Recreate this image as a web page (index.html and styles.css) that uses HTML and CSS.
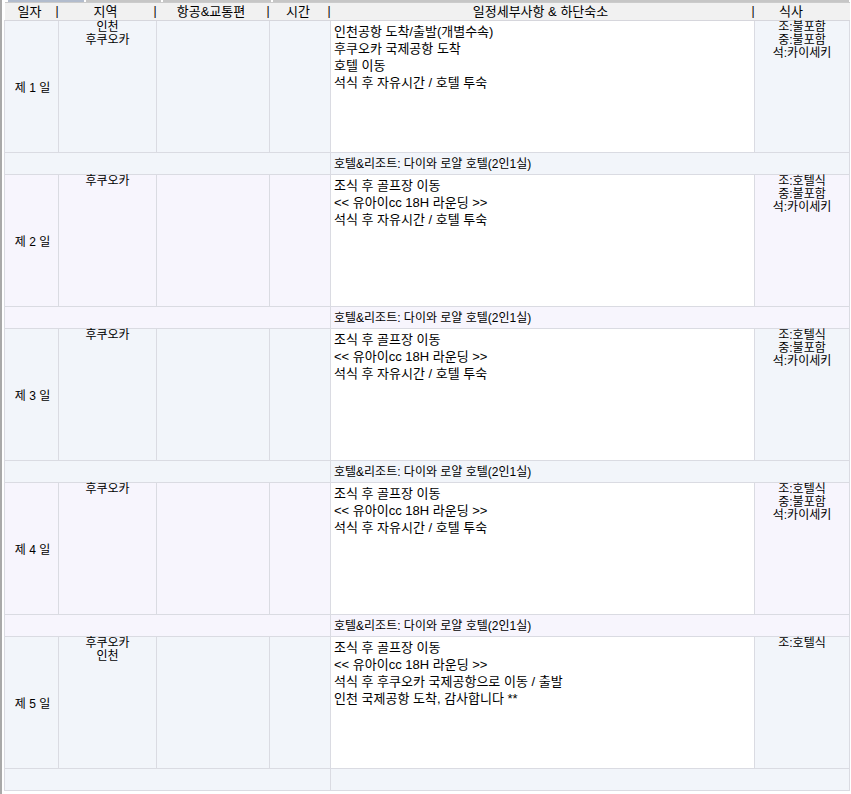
FILE: index.html
```html
<!DOCTYPE html>
<html lang="ko">
<head>
<meta charset="utf-8">
<title>일정표</title>
<link rel="stylesheet" href="styles.css">
</head>
<body>
<div class="page">
  <div class="edge"></div>
  <div class="content">
    <div class="tabs">
      <span class="tab tab-active"></span>
      <span class="tab tab-a"></span>
      <span class="tab tab-b"></span>
      <span class="tab tab-c"></span>
    </div>
    <table class="sched">
      <colgroup>
        <col class="c-day"><col class="c-area"><col class="c-trans"><col class="c-time"><col class="c-detail"><col class="c-meal">
      </colgroup>
      <thead>
        <tr class="head">
          <th><span class="h-txt">일자</span><span class="bar">|</span></th>
          <th><span class="h-txt">지역</span><span class="bar">|</span></th>
          <th><span class="h-txt">항공&amp;교통편</span><span class="bar">|</span></th>
          <th><span class="h-txt">시간</span><span class="bar">|</span></th>
          <th><span class="h-txt">일정세부사항 &amp; 하단숙소</span><span class="bar">|</span></th>
          <th class="h-meal"><span class="h-txt">식사</span></th>
        </tr>
      </thead>
      <tbody>
        <tr class="day odd">
          <td class="d-day">제 1 일</td>
          <td class="d-area">인천<br>후쿠오카</td>
          <td></td>
          <td></td>
          <td class="d-detail">인천공항 도착/출발(개별수속)<br>후쿠오카 국제공항 도착<br>호텔 이동<br>석식 후 자유시간 / 호텔 투숙</td>
          <td class="d-meal">조:불포함<br>중:불포함<br>석:카이세키</td>
        </tr>
        <tr class="hotel odd">
          <td colspan="4"></td>
          <td colspan="2" class="h-name">호텔&amp;리조트: 다이와 로얄 호텔(2인1실)</td>
        </tr>
        <tr class="day even">
          <td class="d-day">제 2 일</td>
          <td class="d-area">후쿠오카</td>
          <td></td>
          <td></td>
          <td class="d-detail">조식 후 골프장 이동<br>&lt;&lt; 유아이cc 18H 라운딩 &gt;&gt;<br>석식 후 자유시간 / 호텔 투숙</td>
          <td class="d-meal">조:호텔식<br>중:불포함<br>석:카이세키</td>
        </tr>
        <tr class="hotel even">
          <td colspan="4"></td>
          <td colspan="2" class="h-name">호텔&amp;리조트: 다이와 로얄 호텔(2인1실)</td>
        </tr>
        <tr class="day odd">
          <td class="d-day">제 3 일</td>
          <td class="d-area">후쿠오카</td>
          <td></td>
          <td></td>
          <td class="d-detail">조식 후 골프장 이동<br>&lt;&lt; 유아이cc 18H 라운딩 &gt;&gt;<br>석식 후 자유시간 / 호텔 투숙</td>
          <td class="d-meal">조:호텔식<br>중:불포함<br>석:카이세키</td>
        </tr>
        <tr class="hotel odd">
          <td colspan="4"></td>
          <td colspan="2" class="h-name">호텔&amp;리조트: 다이와 로얄 호텔(2인1실)</td>
        </tr>
        <tr class="day even">
          <td class="d-day">제 4 일</td>
          <td class="d-area">후쿠오카</td>
          <td></td>
          <td></td>
          <td class="d-detail">조식 후 골프장 이동<br>&lt;&lt; 유아이cc 18H 라운딩 &gt;&gt;<br>석식 후 자유시간 / 호텔 투숙</td>
          <td class="d-meal">조:호텔식<br>중:불포함<br>석:카이세키</td>
        </tr>
        <tr class="hotel even">
          <td colspan="4"></td>
          <td colspan="2" class="h-name">호텔&amp;리조트: 다이와 로얄 호텔(2인1실)</td>
        </tr>
        <tr class="day odd">
          <td class="d-day">제 5 일</td>
          <td class="d-area">후쿠오카<br>인천</td>
          <td></td>
          <td></td>
          <td class="d-detail">조식 후 골프장 이동<br>&lt;&lt; 유아이cc 18H 라운딩 &gt;&gt;<br>석식 후 후쿠오카 국제공항으로 이동 / 출발<br>인천 국제공항 도착, 감사합니다 **</td>
          <td class="d-meal">조:호텔식</td>
        </tr>
        <tr class="hotel odd">
          <td colspan="4"></td>
          <td colspan="2" class="h-name"></td>
        </tr>
      </tbody>
    </table>
  </div>
</div>
</body>
</html>
```
FILE: styles.css
```css
html, body {
  margin: 0;
  padding: 0;
  background: #ffffff;
}
body {
  font-family: "Liberation Sans", "Noto Sans CJK KR", sans-serif;
  font-size: 12px;
  color: #000000;
}
.page {
  display: flex;
  align-items: flex-start;
  height: 794px;
}
.edge {
  width: 2px;
  height: 794px;
  background: #a9a9a9;
  flex: none;
}
.content {
  margin-left: 2px;
  width: 845px;
}
.tabs {
  display: flex;
  height: 2px;
  gap: 2px;
  background: #ffffff;
}
.tab {
  display: block;
  height: 2px;
  background: #c6c6c6;
}
.tab-active { width: 76px; margin-left: 4px; background: #b2bccd; }
.tab-a { width: 75px; }
.tab-b { width: 108px; }
.tab-c { flex: 1; }

.sched {
  width: 845px;
  table-layout: fixed;
  border-collapse: collapse;
  border-spacing: 0;
}
.c-day { width: 54px; }
.c-area { width: 98px; }
.c-trans { width: 113px; }
.c-time { width: 61px; }
.c-detail { width: 424px; }
.c-meal { width: 95px; }

.sched td, .sched th {
  border: 1px solid #dadbe2;
  padding: 0;
  font-weight: normal;
}

.head th {
  position: relative;
  height: 17px;
  background: #f1f1f1;
  border-left: none;
  border-right: none;
  border-top: 1px solid #cbcbcb;
  border-bottom: 1px solid #d6d6dc;
  font-size: 13px;
  line-height: 16px;
  vertical-align: middle;
  text-align: center;
  padding-right: 4px;
}
.head th .bar {
  position: absolute;
  right: 0;
  top: 0;
  font-size: 12px;
  line-height: 17px;
}
.head .h-meal {
  padding-right: 22px;
}

.day td {
  height: 129px;
  vertical-align: top;
}
.hotel td {
  height: 21px;
  vertical-align: middle;
}
.odd td { background: #f2f5fa; }
.even td { background: #f7f5fd; }
.day td.d-detail { background: #ffffff; }

.day td.d-day {
  text-align: center;
  vertical-align: middle;
  padding-left: 2px;
}
.day td.d-area, .day td.d-meal {
  text-align: center;
  line-height: 13px;
  padding-top: 0;
}
.day td.d-detail {
  font-size: 13px;
  line-height: 17px;
  padding: 2px 3px 0 3px;
}
.hotel td.h-name {
  padding-left: 3px;
  line-height: 14px;
}
```
